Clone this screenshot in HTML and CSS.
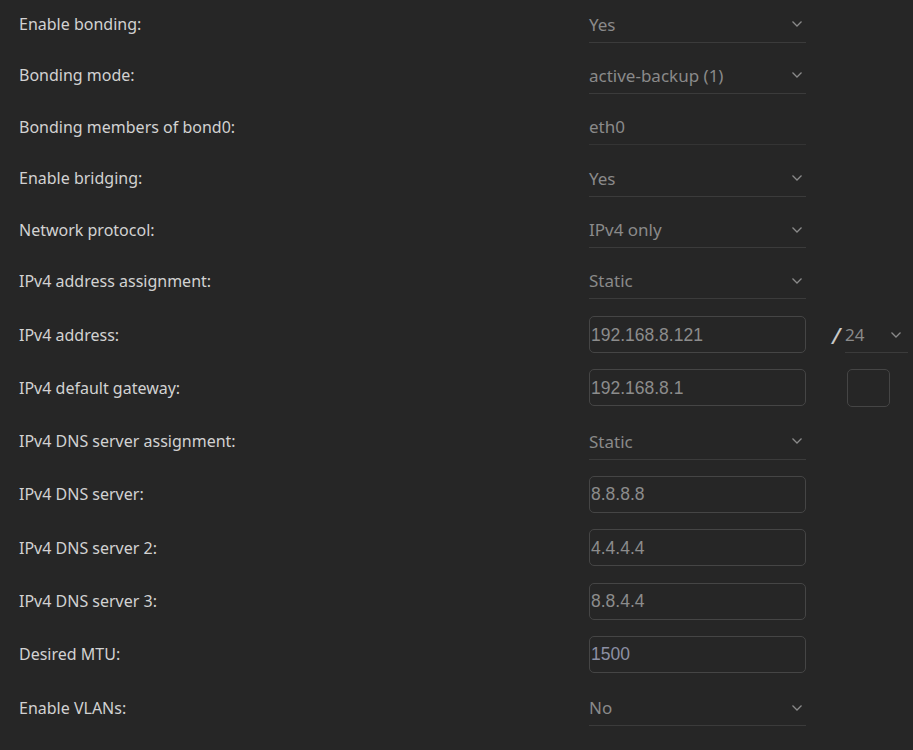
FILE: index.html
```html
<!DOCTYPE html>
<html>
<head>
<meta charset="utf-8">
<link rel="stylesheet" href="styles.css">
</head>
<body>
<div class="form">
  <div class="group group-a">
    <div class="row">
      <div class="label">Enable bonding:</div>
      <div class="select"><span>Yes</span><svg class="chev" viewBox="0 0 12 8"><path d="M1.5 1.5 L6 6 L10.5 1.5"/></svg></div>
    </div>
    <div class="row">
      <div class="label">Bonding mode:</div>
      <div class="select"><span>active-backup (1)</span><svg class="chev" viewBox="0 0 12 8"><path d="M1.5 1.5 L6 6 L10.5 1.5"/></svg></div>
    </div>
    <div class="row">
      <div class="label">Bonding members of bond0:</div>
      <div class="select plain"><span>eth0</span></div>
    </div>
    <div class="row">
      <div class="label">Enable bridging:</div>
      <div class="select"><span>Yes</span><svg class="chev" viewBox="0 0 12 8"><path d="M1.5 1.5 L6 6 L10.5 1.5"/></svg></div>
    </div>
    <div class="row">
      <div class="label">Network protocol:</div>
      <div class="select"><span>IPv4 only</span><svg class="chev" viewBox="0 0 12 8"><path d="M1.5 1.5 L6 6 L10.5 1.5"/></svg></div>
    </div>
    <div class="row">
      <div class="label">IPv4 address assignment:</div>
      <div class="select"><span>Static</span><svg class="chev" viewBox="0 0 12 8"><path d="M1.5 1.5 L6 6 L10.5 1.5"/></svg></div>
    </div>
  </div>
  <div class="group group-b">
    <div class="row">
      <div class="label">IPv4 address:</div>
      <div class="input">192.168.8.121</div>
      <div class="extra">
        <span class="slash">/</span>
        <div class="select small"><span>24</span><svg class="chev" viewBox="0 0 12 8"><path d="M1.5 1.5 L6 6 L10.5 1.5"/></svg></div>
      </div>
    </div>
    <div class="row">
      <div class="label">IPv4 default gateway:</div>
      <div class="input">192.168.8.1</div>
      <div class="extra"><div class="box"></div></div>
    </div>
    <div class="row">
      <div class="label">IPv4 DNS server assignment:</div>
      <div class="select"><span>Static</span><svg class="chev" viewBox="0 0 12 8"><path d="M1.5 1.5 L6 6 L10.5 1.5"/></svg></div>
    </div>
    <div class="row">
      <div class="label">IPv4 DNS server:</div>
      <div class="input">8.8.8.8</div>
    </div>
    <div class="row">
      <div class="label">IPv4 DNS server 2:</div>
      <div class="input">4.4.4.4</div>
    </div>
    <div class="row">
      <div class="label">IPv4 DNS server 3:</div>
      <div class="input">8.8.4.4</div>
    </div>
    <div class="row">
      <div class="label">Desired MTU:</div>
      <div class="input num">1500</div>
    </div>
    <div class="row">
      <div class="label">Enable VLANs:</div>
      <div class="select"><span>No</span><svg class="chev" viewBox="0 0 12 8"><path d="M1.5 1.5 L6 6 L10.5 1.5"/></svg></div>
    </div>
  </div>
</div>
</body>
</html>
```

FILE: styles.css
```css
html, body {
  margin: 0;
  padding: 0;
  background: #262626;
}
body {
  font-family: "Noto Sans", "DejaVu Sans", sans-serif;
  overflow: hidden;
}
.form {
  padding-left: 19px;
  padding-top: 0;
}
.group-a .row {
  height: 51.4px;
}
.group-a {
  margin-top: -1.7px;
}
.group-b .row {
  height: 53.3px;
}
.group-b {
  margin-top: 1.3px;
}
.row {
  display: grid;
  grid-template-columns: 570px 217px auto;
  align-items: center;
}
.label {
  color: #d2d2d2;
  font-size: 16px;
  letter-spacing: 0;
}
.select {
  box-sizing: border-box;
  height: 37px;
  display: flex;
  align-items: center;
  justify-content: space-between;
  border-bottom: 1px solid #3b3b3b;
  color: #8a8a8a;
  font-size: 17px;
  padding-right: 3px;
  padding-top: 1px;
}
.select.plain {
  border-bottom-color: #343434;
}
.chev {
  width: 12px;
  height: 8px;
  fill: none;
  stroke: #8a8a8a;
  stroke-width: 1.3;
}
.input {
  box-sizing: border-box;
  height: 37px;
  border: 1px solid #454545;
  border-radius: 5px;
  display: flex;
  align-items: center;
  padding-left: 1px;
  padding-top: 1px;
  font-family: "Liberation Sans", Arial, sans-serif;
  font-size: 17.5px;
  color: #8c8c8c;
}
.input.num {
  color: #8d90a4;
}
.extra {
  display: flex;
  align-items: center;
  padding-left: 26px;
}
.slash {
  color: #c8c8c8;
  font-size: 22px;
  font-style: italic;
  font-weight: 500;
  width: 13px;
}
.select.small {
  width: 63px;
  padding-right: 6px;
}
.box {
  box-sizing: border-box;
  margin-left: 15px;
  width: 43px;
  height: 38px;
  border: 1px solid #454545;
  border-radius: 5px;
}
```
